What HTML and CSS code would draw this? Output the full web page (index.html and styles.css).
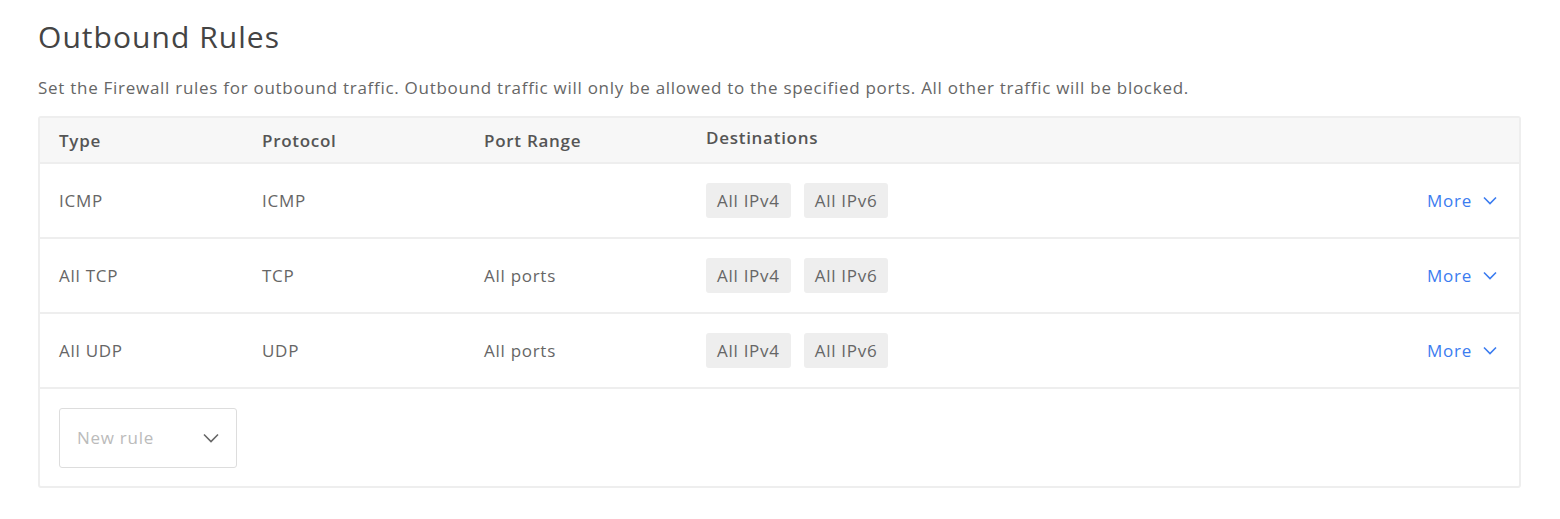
FILE: index.html
```html
<!DOCTYPE html>
<html>
<head>
<meta charset="utf-8">
<link rel="stylesheet" href="styles.css">
</head>
<body>
<div class="page">
  <h2 class="title">Outbound Rules</h2>
  <p class="desc">Set the Firewall rules for outbound traffic. Outbound traffic will only be allowed to the specified ports. All other traffic will be blocked.</p>
  <div class="table">
    <div class="row head">
      <div class="c c-type">Type</div>
      <div class="c c-proto">Protocol</div>
      <div class="c c-port">Port Range</div>
      <div class="c c-dest dest-head">Destinations</div>
    </div>
    <div class="row">
      <div class="c c-type">ICMP</div>
      <div class="c c-proto">ICMP</div>
      <div class="c c-port"></div>
      <div class="c c-dest"><span class="tag">All IPv4</span><span class="tag">All IPv6</span></div>
      <div class="more">More <svg width="14" height="9" viewBox="0 0 14 9"><path d="M1 1.5 L7 7.5 L13 1.5" fill="none" stroke="currentColor" stroke-width="1.6"/></svg></div>
    </div>
    <div class="row">
      <div class="c c-type">All TCP</div>
      <div class="c c-proto">TCP</div>
      <div class="c c-port">All ports</div>
      <div class="c c-dest"><span class="tag">All IPv4</span><span class="tag">All IPv6</span></div>
      <div class="more">More <svg width="14" height="9" viewBox="0 0 14 9"><path d="M1 1.5 L7 7.5 L13 1.5" fill="none" stroke="currentColor" stroke-width="1.6"/></svg></div>
    </div>
    <div class="row">
      <div class="c c-type">All UDP</div>
      <div class="c c-proto">UDP</div>
      <div class="c c-port">All ports</div>
      <div class="c c-dest"><span class="tag">All IPv4</span><span class="tag">All IPv6</span></div>
      <div class="more">More <svg width="14" height="9" viewBox="0 0 14 9"><path d="M1 1.5 L7 7.5 L13 1.5" fill="none" stroke="currentColor" stroke-width="1.6"/></svg></div>
    </div>
    <div class="foot">
      <div class="select"><span>New rule</span><svg width="16" height="10" viewBox="0 0 16 10"><path d="M1 1.5 L8 8.5 L15 1.5" fill="none" stroke="#666" stroke-width="1.6"/></svg></div>
    </div>
  </div>
</div>
</body>
</html>
```
FILE: styles.css
```css
html, body { margin: 0; padding: 0; background: #fff; }
body { font-family: "Open Sans", "Lato", sans-serif; color: #666; letter-spacing: 0.72px; }
.page { padding: 18px 39px 0 38px; }
.title { margin: 0; font-size: 30px; font-weight: 400; line-height: 38px; color: #444; letter-spacing: 1.05px; }
.desc { margin: 21px 0 0; font-size: 17px; line-height: 22px; color: #666; }
.table { margin-top: 17px; width: 1479px; border: 2px solid #eeeeee; border-radius: 3px; }
.row { display: flex; align-items: center; height: 73px; border-bottom: 2px solid #eeeeee; font-size: 17px; }
.row.head { height: 44px; background: #f7f7f7; font-weight: 600; color: #555; }
.c { flex: none; }
.c-type { width: 203px; padding-left: 19px; }
.c-proto { width: 222px; }
.c-port { width: 222px; }
.c-dest { display: flex; gap: 13px; }
.dest-head { margin-top: -5px; }
.tag { display: inline-block; height: 35px; line-height: 35px; padding: 0 11px; background: #eeeeee; border-radius: 3px; color: #666; }
.more { margin-left: auto; margin-right: 22px; color: #3b7cf0; display: flex; align-items: center; gap: 11px; }
.foot { height: 97px; display: flex; align-items: center; padding-left: 19px; }
.select { width: 178px; height: 60px; border: 1px solid #dddddd; border-radius: 3px; display: flex; align-items: center; justify-content: space-between; padding: 0 17px 0 17px; box-sizing: border-box; color: #bbb; font-size: 17px; }
```
